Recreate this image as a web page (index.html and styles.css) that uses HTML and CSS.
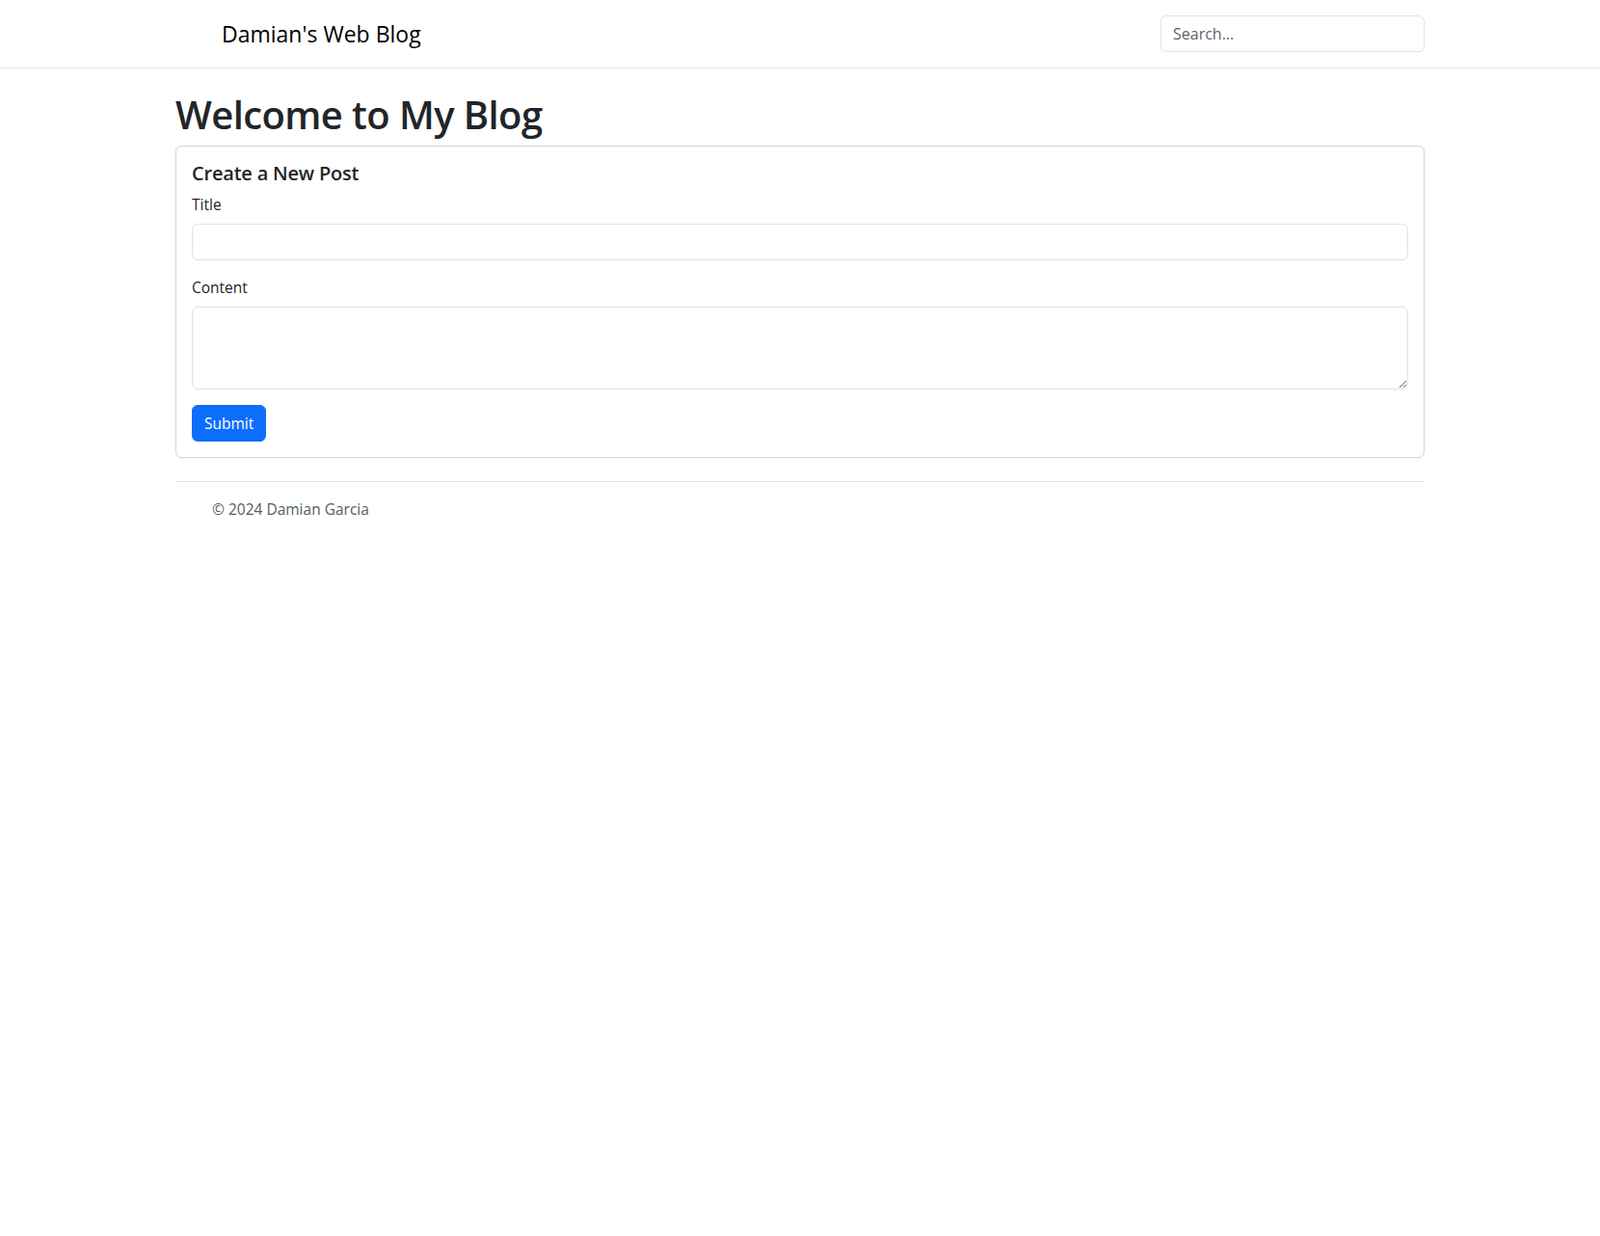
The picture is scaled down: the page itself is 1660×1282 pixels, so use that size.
FILE: index.html
```html
<!DOCTYPE html>
<html lang="en">
<head>
<meta charset="utf-8">
<title>Damian's Web Blog</title>
<link rel="stylesheet" href="styles.css">
</head>
<body>
<nav class="navbar">
  <div class="container nav-inner">
    <a class="brand" href="#">Damian's Web Blog</a>
    <input class="search" type="search" placeholder="Search...">
  </div>
</nav>
<main class="container main">
  <h1 class="page-title">Welcome to My Blog</h1>
  <section class="card">
    <h5 class="card-title">Create a New Post</h5>
    <form>
      <div class="field">
        <label class="label" for="title">Title</label>
        <input class="control" id="title" type="text">
      </div>
      <div class="field">
        <label class="label" for="content">Content</label>
        <textarea class="control textarea" id="content" rows="3"></textarea>
      </div>
      <button type="button" class="btn">Submit</button>
    </form>
  </section>
  <footer class="footer">
    <p class="copy">© 2024 Damian Garcia</p>
  </footer>
</main>
</body>
</html>
```
FILE: styles.css
```css
* { box-sizing: border-box; }
html, body { margin: 0; padding: 0; }
body {
  font-family: "Open Sans", "Noto Sans", sans-serif;
  font-size: 16px;
  line-height: 1.5;
  color: #212529;
  background: #fff;
}
.container {
  max-width: 1320px;
  margin: 0 auto;
  padding: 0 12px;
}
.navbar {
  border-bottom: 1px solid #dee2e6;
  padding: 16px 0;
}
.nav-inner {
  display: flex;
  align-items: center;
  justify-content: space-between;
}
.brand {
  margin-left: 48px;
  font-size: 23px;
  color: #000;
  text-decoration: none;
  line-height: 1.5;
}
.search {
  width: 274px;
  height: 38px;
  padding: 6px 12px;
  font-family: inherit;
  font-size: 16px;
  color: #212529;
  border: 1px solid #dee2e6;
  border-radius: 6px;
  outline: none;
}
.search::placeholder { color: #5c636a; }
.main { padding-top: 24px; }
.page-title {
  margin: 0 0 8px;
  font-size: 40px;
  font-weight: 600;
  letter-spacing: -0.6px;
  line-height: 1.2;
}
.card {
  border: 1px solid #d3d4d5;
  border-radius: 6px;
  padding: 16px;
}
.card-title {
  margin: 0 0 8px;
  font-size: 20px;
  font-weight: 600;
  letter-spacing: -0.2px;
  line-height: 1.2;
}
.field { margin-bottom: 16px; }
.label {
  display: block;
  margin-bottom: 8px;
  font-size: 15.5px;
  line-height: 24px;
}
.control {
  display: block;
  width: 100%;
  height: 38px;
  padding: 6px 12px;
  font-family: inherit;
  font-size: 16px;
  border: 1px solid #dee2e6;
  border-radius: 6px;
  outline: none;
}
.textarea {
  height: 86px;
  resize: vertical;
}
.btn {
  display: block;
  height: 38px;
  padding: 6px 12px;
  font-family: inherit;
  font-size: 15.5px;
  color: #fff;
  background: #0d6efd;
  border: 1px solid #0d6efd;
  border-radius: 6px;
}
.footer {
  margin-top: 24px;
  border-top: 1px solid #dee2e6;
  padding: 16px 0 16px 38px;
}
.copy {
  margin: 0;
  font-size: 15.5px;
  line-height: 24px;
  color: #555c63;
}
```
